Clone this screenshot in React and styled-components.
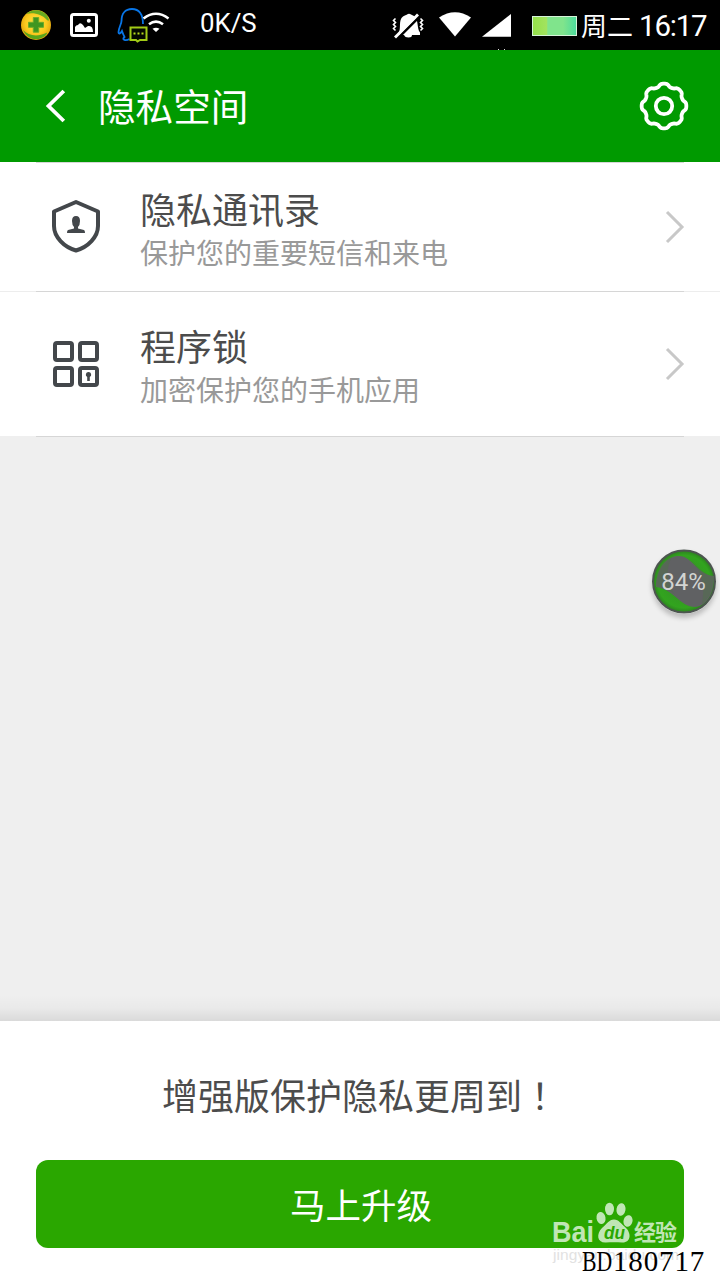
import React from "react";
import styled, { createGlobalStyle } from "styled-components";

const GlobalStyle = createGlobalStyle`
  * { box-sizing: border-box; }
  body {
    margin: 0;
    background: #efefef;
    font-family: "Noto Sans CJK SC", sans-serif;
  }
`;

const Screen = styled.div`
  position: relative;
  display: flex;
  flex-direction: column;
  width: 720px;
  height: 1280px;
  overflow: hidden;
  background: #efefef;
`;

const StatusBar = styled.div`
  display: flex;
  align-items: center;
  justify-content: space-between;
  height: 50px;
  padding: 0 14px 0 20px;
  background: #000;
  color: #fff;
`;

const StatusGroup = styled.div`
  display: flex;
  align-items: center;
  height: 50px;
`;

const StatusIcon = styled.svg`
  display: block;
  flex: none;
  height: 50px;
`;

const Speed = styled.span`
  margin-left: 28px;
  padding-bottom: 5px;
  font: 400 25.8px/30px Roboto, sans-serif;
`;

const Clock = styled.span`
  display: flex;
  align-items: center;
  gap: 6px;
  margin-left: 4px;
  line-height: 50px;
  white-space: nowrap;
`;

const Weekday = styled.span`
  font-size: 26px;
  font-weight: 400;
`;

const Time = styled.span`
  width: 67px;
  font-family: Roboto, sans-serif;
  font-size: 29.5px;
  font-weight: 400;
  letter-spacing: -1.2px;
  padding-top: 2px;
`;

const Battery = styled.span`
  width: 45px;
  height: 20px;
  margin: 2px 0 0 20px;
  border: 1px solid #d5f3d8;
  background: linear-gradient(90deg, #94e04a 0, #a3e360 33%, #80e48c 34%, #80e48c 70%, #4ddb9c 100%);
`;

const Header = styled.header`
  display: flex;
  align-items: center;
  height: 112px;
  padding: 0 31px 0 45px;
  background: #009a00;
  color: #fff;
`;

const Title = styled.h1`
  flex: 1;
  margin: 0 0 2px 31px;
  font-size: 37.6px;
  font-weight: 400;
  line-height: 56px;
`;

const Icon = styled.svg`
  display: block;
  flex: none;
  overflow: visible;
`;

const Row = styled.div`
  display: flex;
  align-items: center;
  height: ${(p) => p.$height}px;
  padding: 0 36px 0 50px;
  background: #fff;
`;

const Divider = styled.div`
  height: 1px;
  background: linear-gradient(#d6d6d6, #d6d6d6) 36px 0 / 648px 1px no-repeat ${(p) => p.$ends};
`;

const RowText = styled.div`
  flex: 1;
  margin-left: 38px;
`;

const RowTitle = styled.div`
  color: #4c4c4c;
  font-size: 36px;
  line-height: 46px;
`;

const RowSubtitle = styled.div`
  padding-top: 2px;
  margin-bottom: -1px;
  color: #999;
  font-size: 28px;
  line-height: 38px;
`;

const Spacer = styled.div`
  flex: 1;
`;

const Shade = styled.div`
  height: 26px;
  background: linear-gradient(rgba(0, 0, 0, 0), rgba(0, 0, 0, 0.025) 50%, rgba(0, 0, 0, 0.09));
`;

const Footer = styled.footer`
  display: flex;
  flex-direction: column;
  align-items: center;
  height: 259px;
  padding: 47px 36px 32px;
  background: #fff;
`;

const Notice = styled.p`
  margin: 0;
  color: #4c4c4c;
  font-size: 36px;
  line-height: 52px;
`;

const CenteredMark = styled.span`
  font-family: "Noto Sans CJK TC", sans-serif;
`;

const UpgradeButton = styled.button`
  width: 648px;
  height: 88px;
  margin-top: 40px;
  padding: 0 0 0 2px;
  border: 0;
  border-radius: 12px;
  background: #2aa700;
  color: #fff;
  font: 400 35.5px/88px "Noto Sans CJK SC", sans-serif;
`;

const Bubble = styled.div`
  position: absolute;
  left: 652px;
  top: 549px;
  width: 64px;
  height: 65px;
  border-radius: 50%;
  box-shadow: 0 4px 5px rgba(0, 0, 0, 0.22);
`;

const BubbleArt = styled.svg`
  display: block;
`;

const BubbleLabel = styled.span`
  position: absolute;
  inset: 0 1px 0 0;
  color: #d2d4d2;
  font: 400 24px/66px Roboto, sans-serif;
  text-align: center;
`;

const Watermark = styled.div`
  position: absolute;
  left: 552px;
  top: 1202px;
  width: 128px;
  height: 66px;
`;

const Stamp = styled.div`
  position: absolute;
  left: 582px;
  top: 1245px;
  display: flex;
  color: #000;
  font: 400 29px/32px "Liberation Serif", serif;
  white-space: nowrap;
`;

const StampPrefix = styled.span`
  width: 31px;
  transform: scaleX(0.75);
  transform-origin: left;
`;

const StampDigits = styled.span`
  letter-spacing: 0.85px;
`;

const gearPath = (() => {
  const pts = [];
  for (let i = 0; i < 144; i++) {
    const a = (i / 144) * Math.PI * 2;
    const wave = Math.cos(8 * a);
    const r = 20.9 + 1.5 * Math.tanh(1.6 * wave + 0.3);
    pts.push(`${(24 + r * Math.cos(a)).toFixed(2)} ${(24 + r * Math.sin(a)).toFixed(2)}`);
  }
  return `M${pts.join("L")}Z`;
})();

const LeftStatusIcons = () => (
  <StatusIcon width="152" height="50" viewBox="20 0 152 50" fill="none">
    <defs>
      <radialGradient id="ball" cx="0.5" cy="0.45" r="0.55">
        <stop offset="0" stopColor="#ffe94a" />
        <stop offset="0.65" stopColor="#fbc91e" />
        <stop offset="1" stopColor="#e0a10c" />
      </radialGradient>
    </defs>
    <circle cx="36" cy="25" r="15" fill="url(#ball)" />
    <path d="M26 14C32 8 44 9 48 17C49.500 20 49 22 47 20C42 14 33 12 26 14Z" fill="#67ab20" />
    <path d="M23 30C28 36 38 37 46 33C48 32 47 34 45 36C39 41 28 41 23 30Z" fill="#58a51b" />
    <path d="M33.3 17.5h5.4v4.8h4.8v5h-4.8v4.9h-5.4v-4.9h-4.8v-5h4.8Z" fill="#3f9620" stroke="#6dab28" />
    <rect x="71.5" y="14.5" width="25" height="21" rx="2" stroke="#fff" strokeWidth="3" />
    <circle cx="88.8" cy="20.8" r="2" fill="#fff" />
    <path d="M75 32V27Q76 25 78 25Q80 21.5 83 25L85 28L88 26Q93 25 93 32Z" fill="#fff" />
    <path d="M143 24C143 14 139 9 132 9C125 9 121.5 14 121.5 21C121.5 24 118.5 28 118.5 32C118.5 35 121 33 122 31C123 34 124 36 124.500 37C121 40 126 41 129.500 39" stroke="#0876e8" strokeWidth="1.8" />
    <path d="M130.500 27.500H146.500V40H140L137.500 41.500L136 40H130.500Z" fill="#050900" stroke="#a2cb16" strokeWidth="2" />
    <path d="M133.500 32.500h2v2h-2ZM137.500 32.500h2v2h-2ZM141.500 32.500h2v2h-2Z" fill="#b7dc1c" />
    <path d="M143.500 18.500Q156 9 168.500 18.500" stroke="#fff" strokeWidth="2.600" />
    <path d="M149 24.300Q156 19 163 24.300" stroke="#fff" strokeWidth="2.600" />
    <path d="M152.500 28.800Q156 26.800 159.500 28.800L156 32Z" fill="#fff" />
  </StatusIcon>
);

const RightStatusIcons = () => (
  <StatusIcon width="120" height="50" viewBox="392 0 120 50">
    <path d="M398.500 35V33C401.500 29 398 20 403 16.500C405 15 406 15.500 407 14.500Q409 13 411 14.500L414 16C419 20 416.500 28 420 32.500V35H412Q412 37.500 408.500 37.500Q405 37.500 404 35Z" fill="#fff" />
    <path d="M396.500 39.500L420.500 15.500" stroke="#000" strokeWidth="2.600" />
    <path d="M395 37.500L418 14.500" stroke="#fff" strokeWidth="2.800" />
    <path d="M395.500 18.500l-2 2 2 2-2 2 2 2-2 2 2 2M420.500 18.500l2 2-2 2 2 2-2 2 2 2-2 2" fill="none" stroke="#fff" strokeWidth="1.600" />
    <path d="M439 17.500Q455 7 471 17.500L455 36.500Z" fill="#fff" />
    <path d="M482 36.800L511 14V36.800Z" fill="#fff" />
    <path d="M498 49h1v1h-1ZM504 49h1v1h-1Z" fill="#ddd" />
  </StatusIcon>
);

const BackIcon = () => (
  <Icon width="22" height="34" viewBox="0 0 22 34" fill="none">
    <path d="M18.800 2L3.500 17L18.800 32" stroke="#fff" strokeWidth="3.800" />
  </Icon>
);

const GearIcon = () => (
  <Icon width="50" height="48" viewBox="-1 0 50 48" fill="none" stroke="#fff" strokeWidth="3.800">
    <path d={gearPath} />
    <circle cx="24" cy="24" r="8.200" />
  </Icon>
);

const ShieldIcon = () => (
  <Icon width="52" height="56" viewBox="0 0 52 56">
    <path d="M26 3L48 12.500V27C48 38 38 48 26 51.500C14 48 4 38 4 27V12.500Z" fill="none" stroke="#43474b" strokeWidth="4" strokeLinejoin="round" />
    <path d="M26 17Q30 17 30 22Q30 26 28 28V29.500L34 31Q35 31.500 35 34H17Q17 31.500 18 31L24 29.500V28Q22 26 22 22Q22 17 26 17Z" fill="#43474b" />
  </Icon>
);

const AppLockIcon = () => (
  <Icon width="52" height="48" viewBox="-1 0 52 48" fill="none" stroke="#43474b" strokeWidth="4">
    <rect x="4" y="3" width="17" height="17" rx="2" />
    <rect x="29" y="3" width="17" height="17" rx="2" />
    <rect x="4" y="28" width="17" height="17" rx="2" />
    <rect x="29" y="28" width="17" height="17" rx="2" />
    <path d="M37.500 32a2.600 2.600 0 0 1 1.300 4.900V41h-2.600V36.900A2.600 2.600 0 0 1 37.500 32Z" fill="#43474b" stroke="none" />
  </Icon>
);

const Chevron = () => (
  <Icon width="18" height="32" viewBox="0 0 18 32" fill="none">
    <path d="M1 1L16 16L1 31" stroke="#c8c8c8" strokeWidth="3" />
  </Icon>
);

const Item = ({ icon, title, subtitle, height }) => (
  <Row $height={height}>
    {icon}
    <RowText>
      <RowTitle>{title}</RowTitle>
      <RowSubtitle>{subtitle}</RowSubtitle>
    </RowText>
    <Chevron />
  </Row>
);

const FloatingBubble = () => (
  <Bubble>
    <BubbleArt width="64" height="65" viewBox="0 0 64 65">
      <defs>
        <radialGradient id="orb">
          <stop offset="0.5" stopColor="#339a22" />
          <stop offset="0.85" stopColor="#32a41e" />
          <stop offset="1" stopColor="#2d7e20" />
        </radialGradient>
      </defs>
      <circle cx="32" cy="32.500" r="31" fill="url(#orb)" stroke="#4d5550" strokeWidth="2" />
      <path d="M4 38C4 23 12 8 26 7C40 6 45 26 62 27C62 46 54 57 43 58C28 58 22 40 4 38Z" fill="#606163" />
      <path d="M4 38C4 23 10 10 20 8C13 20 15 34 23 46C17 40 12 38 4 38ZM39 11C46 17 51 26 62 27C62 40 57 50 50 55C53 38 51 24 39 11Z" fill="#4d7447" opacity="0.400" />
    </BubbleArt>
    <BubbleLabel>84%</BubbleLabel>
  </Bubble>
);

const BaiduLogo = () => (
  <Watermark>
    <svg width="128" height="66" viewBox="0 0 128 66">
      <text x="0" y="40" fill="#c0e6b5" fontFamily="Liberation Sans, sans-serif" fontWeight="700" fontSize="29" textLength="42" lengthAdjust="spacingAndGlyphs">Bai</text>
      <g fill="#c0e6b5">
        <ellipse cx="49" cy="16" rx="4.500" ry="6" transform="rotate(-10 49 16)" />
        <ellipse cx="57.500" cy="7" rx="4.500" ry="6.300" />
        <ellipse cx="69" cy="7.500" rx="4.500" ry="6.300" transform="rotate(10 69 7.500)" />
        <ellipse cx="76" cy="19" rx="4.500" ry="5.800" transform="rotate(14 76 19)" />
        <path d="M62 17.500C67 17.500 69 22 73 25C80 31 79 41 70 40.500C65 40 59 40 54 40.500C45 41 44 32 50 26C55 22 57 17.500 62 17.500Z" />
      </g>
      <text x="52" y="36.500" fill="#2aa700" fontFamily="Liberation Sans, sans-serif" fontWeight="700" fontStyle="italic" fontSize="18" textLength="21" lengthAdjust="spacingAndGlyphs">du</text>
      <text x="82" y="38" fill="#c0e6b5" fontFamily="Noto Sans CJK SC, sans-serif" fontWeight="700" fontSize="22" textLength="43">经验</text>
      <text x="1" y="57.500" fill="#e2e2e2" fontFamily="Liberation Sans, sans-serif" fontSize="15.500" textLength="126">jingyan.baidu.com</text>
    </svg>
  </Watermark>
);

export default function App() {
  return (
    <>
      <GlobalStyle />
      <Screen>
        <StatusBar>
          <StatusGroup>
            <LeftStatusIcons />
            <Speed>0K/S</Speed>
          </StatusGroup>
          <StatusGroup>
            <RightStatusIcons />
            <Battery />
            <Clock>
              <Weekday>周二</Weekday>
              <Time>16:17</Time>
            </Clock>
          </StatusGroup>
        </StatusBar>
        <Header>
          <BackIcon />
          <Title>隐私空间</Title>
          <GearIcon />
        </Header>
        <Divider $ends="#fff" />
        <Item icon={<ShieldIcon />} title="隐私通讯录" subtitle="保护您的重要短信和来电" height={128} />
        <Divider $ends="#ededed" />
        <Item icon={<AppLockIcon />} title="程序锁" subtitle="加密保护您的手机应用" height={144} />
        <Divider $ends="#efefef" />
        <Spacer />
        <Shade />
        <Footer>
          <Notice>增强版保护隐私更周到<CenteredMark>！</CenteredMark></Notice>
          <UpgradeButton>马上升级</UpgradeButton>
        </Footer>
        <FloatingBubble />
        <BaiduLogo />
        <Stamp>
          <StampPrefix>BD</StampPrefix>
          <StampDigits>180717</StampDigits>
        </Stamp>
      </Screen>
    </>
  );
}
